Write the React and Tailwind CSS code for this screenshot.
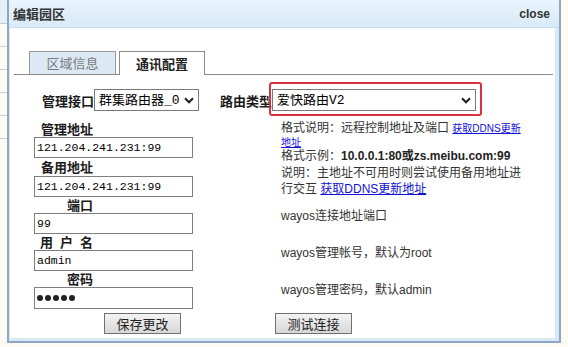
import React from 'react';

const mono = "font-['Liberation_Mono','Noto_Sans_CJK_SC',monospace]";
const sans = "font-['Liberation_Sans','Noto_Sans_CJK_SC',sans-serif]";

function Chevron() {
  return (
    <svg width="10" height="7" viewBox="0 0 10 7" fill="none" stroke="#1f1f1f" strokeWidth="2">
      <polyline points="1,1.3 5,5.3 9,1.3" />
    </svg>
  );
}

function Select({ value, className = '' }) {
  return (
    <div className={`h-[22px] flex items-center border border-[#7a7a7a] bg-white pl-[4px] pr-[4px] ${className}`}>
      <span className={`flex-1 overflow-hidden whitespace-nowrap text-[13px] leading-none text-black ${mono}`}>{value}</span>
      <Chevron />
    </div>
  );
}

function Label({ children, className = '' }) {
  return (
    <div className={`w-[59px] flex justify-end items-center pb-[1px] text-[13px] font-bold text-[#1a1a1a] leading-none ${className}`}>
      {children}
    </div>
  );
}

function Field({ children, className = '' }) {
  return (
    <div className={`w-[159px] flex items-center border border-[#7f7f7f] bg-white pl-[2px] ${className}`}>
      {children}
    </div>
  );
}

function Hint({ children }) {
  return (
    <div className={`ml-[88px] w-[245px] flex items-center text-[12px] leading-[14px] text-[#333] ${sans}`}>
      {children}
    </div>
  );
}

function Button({ children }) {
  return (
    <div className="w-[77px] h-[21px] flex items-center justify-center border border-[#707070] bg-gradient-to-b from-[#f3f3f3] to-[#d7d7d7] text-[13px] leading-none text-[#222]">
      {children}
    </div>
  );
}

export default function App() {
  return (
    <div className="w-[568px] h-[347px] flex bg-[#fbfaf3] overflow-hidden font-['Noto_Sans_CJK_SC',sans-serif]">
      {/* page behind the dialog */}
      <div className="w-[7px] shrink-0 flex flex-col">
        <div className="h-[24px] bg-[#e6eef6] border-b border-[#c3cbd5]" />
        {[0, 1, 2, 3, 4].map((i) => (
          <div key={i} className="h-[23px] border-b border-[#c9ced5]" />
        ))}
      </div>

      {/* dialog */}
      <div className="w-[554px] h-[343px] shrink-0 flex flex-col border-x-2 border-b-2 border-[#8ea7c5] bg-[#d8e8f5]">
        <div className="h-[28px] shrink-0 flex items-center justify-between pl-[4px] pr-[9px] bg-gradient-to-b from-[#e9f4fc] to-[#d9eaf8] border-b border-[#c8dcee]">
          <span className="text-[13px] font-bold text-[#333]">编辑园区</span>
          <span className={`text-[12px] font-bold text-[#333] ${sans}`}>close</span>
        </div>

        <div className="flex-1 ml-[1px] mr-[4px] mb-[3px] bg-white flex flex-col">
          {/* tabs */}
          <div className="ml-[4px] mr-[2px] h-[47px] shrink-0 flex items-end gap-[3px] pl-[15px] border-b border-[#8a8a8a]">
            <div className="w-[87px] h-[23px] flex items-center justify-center border border-b-0 border-[#9a9a9a] bg-[#dce9f5] text-[13px] text-[#7a7a7a]">
              区域信息
            </div>
            <div className="w-[86px] h-[24px] -mb-px flex items-center justify-center border border-b-0 border-[#8a8a8a] bg-white text-[13px] font-bold text-[#222]">
              通讯配置
            </div>
          </div>

          {/* interface + router type */}
          <div className="h-[22px] flex items-center mt-[14px] pl-[32px]">
            <span className="text-[13px] font-bold text-[#1a1a1a] leading-none">管理接口</span>
            <Select value="群集路由器_0" className="w-[105px]" />
            <span className="ml-[21px] text-[13px] font-bold text-[#1a1a1a] leading-none">路由类型</span>
            <div className="relative">
              <Select value="爱快路由V2" className="w-[204px]" />
              <div className="absolute -left-[3px] -right-[6px] -top-[7px] -bottom-[5px] border-2 border-[#d8323e] rounded-[3px]" />
            </div>
          </div>

          <div className="flex flex-col mt-[9px] pl-[24px]">
            {/* addresses */}
            <div className="h-[77px] flex">
              <div className="flex flex-col w-[159px]">
                <Label className="h-[17px]">管理地址</Label>
                <Field className="h-[21px]">
                  <span className={`text-[11.5px] text-black leading-none ${mono}`}>121.204.241.231:99</span>
                </Field>
                <Label className="h-[18px]">备用地址</Label>
                <Field className="h-[21px]">
                  <span className={`text-[11.5px] text-black leading-none ${mono}`}>121.204.241.231:99</span>
                </Field>
              </div>
              <div className={`ml-[88px] w-[245px] flex flex-col justify-center text-[12px] text-[#333] ${sans}`}>
                <div className="h-[28px] leading-[14px]">
                  格式说明：远程控制地址及端口{' '}
                  <a className="text-[10px] leading-[10px] text-[#1010d8] underline">获取DDNS更新地址</a>
                </div>
                <div className="h-[14px] leading-[14px] whitespace-nowrap">
                  格式示例：<b className="text-[#222]">10.0.0.1:80或zs.meibu.com:99</b>
                </div>
                <div className="h-[32px] mt-[2px] leading-[16px]">
                  说明：主地址不可用时则尝试使用备用地址进行交互{' '}
                  <a className="leading-[12px] text-[#1010d8] underline">获取DDNS更新地址</a>
                </div>
              </div>
            </div>

            {/* port */}
            <div className="h-[37px] flex">
              <div className="flex flex-col w-[159px]">
                <Label className="h-[16px]">端口</Label>
                <Field className="h-[21px]">
                  <span className={`text-[11.5px] text-black leading-none ${mono}`}>99</span>
                </Field>
              </div>
              <Hint>wayos连接地址端口</Hint>
            </div>

            {/* user */}
            <div className="h-[37px] flex">
              <div className="flex flex-col w-[159px]">
                <Label className="h-[16px] gap-[7px]">
                  <span>用</span>
                  <span>户</span>
                  <span>名</span>
                </Label>
                <Field className="h-[21px]">
                  <span className={`text-[11.5px] text-black leading-none ${mono}`}>admin</span>
                </Field>
              </div>
              <Hint>wayos管理帐号，默认为root</Hint>
            </div>

            {/* password */}
            <div className="h-[38px] flex">
              <div className="flex flex-col w-[159px]">
                <Label className="h-[16px]">密码</Label>
                <Field className="h-[22px] gap-[2px]">
                  {[0, 1, 2, 3, 4].map((i) => (
                    <span key={i} className="w-[6px] h-[6px] rounded-full bg-[#222]" />
                  ))}
                </Field>
              </div>
              <Hint>wayos管理密码，默认admin</Hint>
            </div>
          </div>

          {/* actions */}
          <div className="flex mt-[4px] pl-[94px] gap-[94px]">
            <Button>保存更改</Button>
            <Button>测试连接</Button>
          </div>
        </div>
      </div>
    </div>
  );
}
